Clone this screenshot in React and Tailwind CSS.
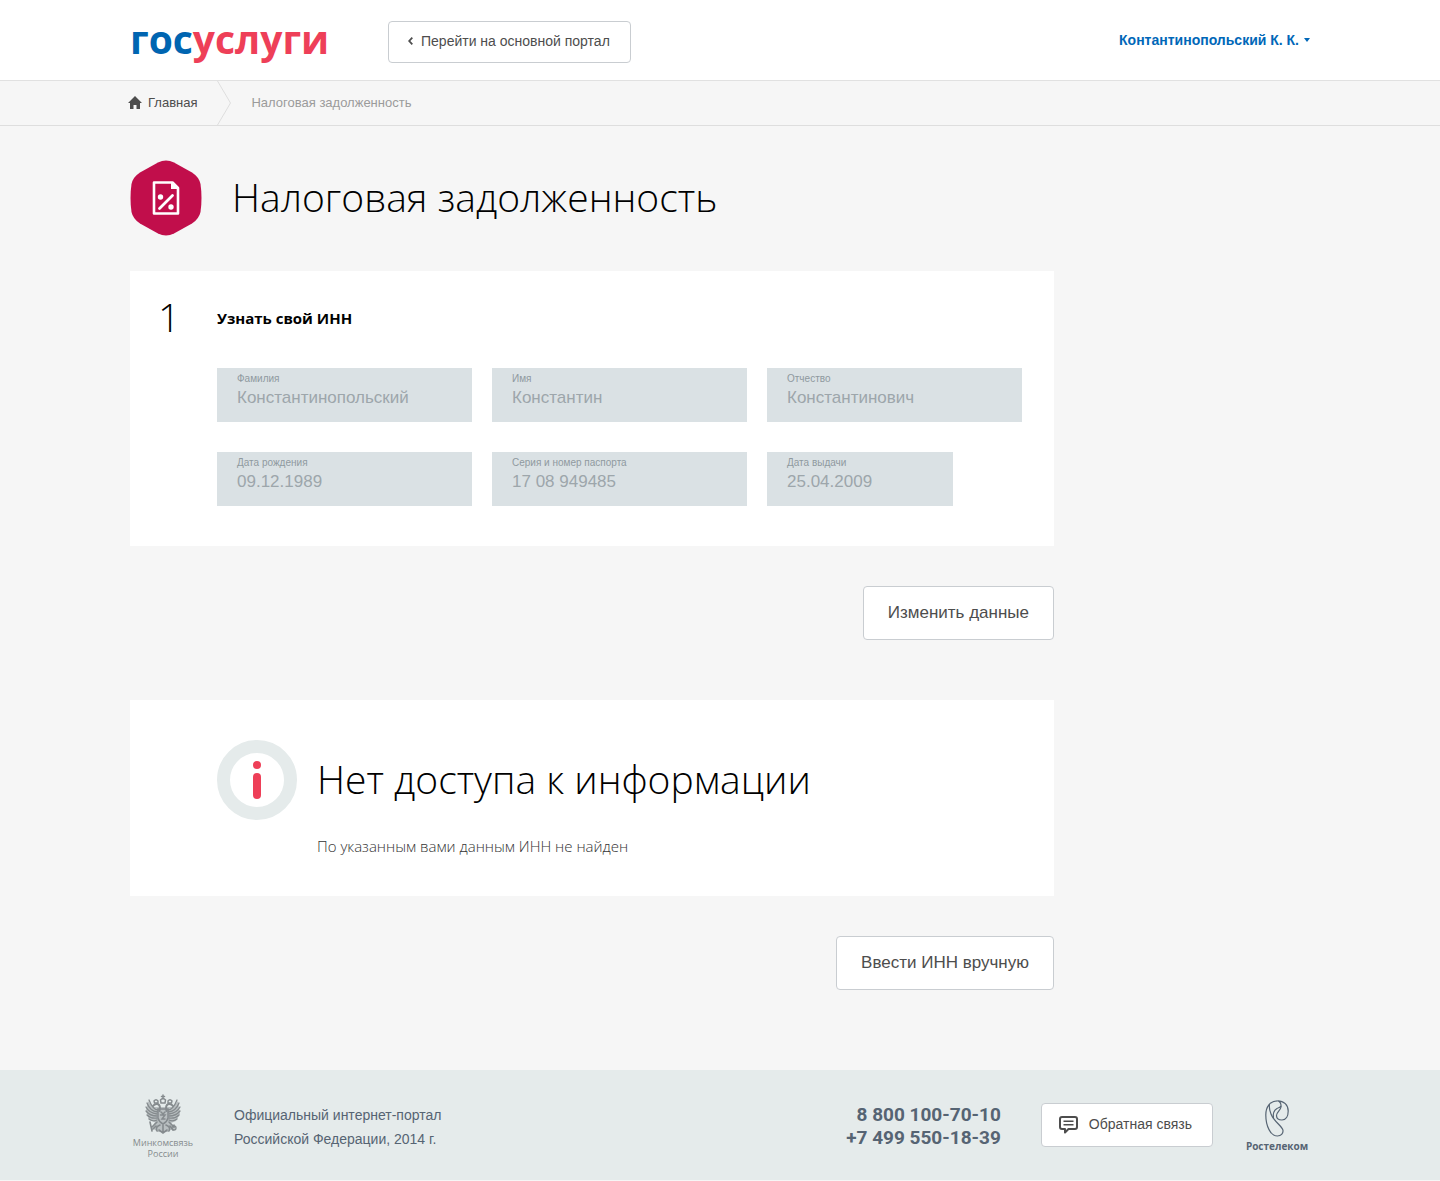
import React from "react";

const HELV = "font-['Liberation_Sans',Arial,sans-serif]";
const OPEN = "font-['Open_Sans','Noto_Sans',sans-serif]";

function Field({ id, label, value, className = "" }) {
  return (
    <div className={`flex h-[54px] flex-col bg-[#dae1e4] px-5 pt-1 ${className}`}>
      <label htmlFor={id} className="h-[14px] text-[10px] leading-[14px] text-[#8f999f]">{label}</label>
      <input id={id} readOnly defaultValue={value} className="h-6 w-full bg-transparent text-[17px] leading-6 text-[#9da6ab] outline-none" />
    </div>
  );
}

function HomeIcon() {
  return (
    <svg width="14" height="13" viewBox="0 0 14 13" fill="#4d4d4d" aria-hidden="true" className="mb-0.5">
      <path d="M7 0 14 7H12V13H8.5V9H5.5V13H2V7H0Z" />
    </svg>
  );
}

function TaxIcon() {
  return (
    <svg width="72" height="76" viewBox="0 0 72 76" className="shrink-0" aria-hidden="true">
      <path fill="#c10e4b" d="M28 2.500Q36-1.500 44 2.500L62 12.500Q69 17 70.500 24Q72.500 38 70.500 52Q69 59 62 63.500L44 73.500Q36 77.500 28 73.500L10 63.500Q3 59 1.500 52Q-.500 38 1.500 24Q3 17 10 12.500Z" />
      <path fill="none" stroke="#fff" strokeWidth="2.600" strokeLinejoin="round" d="M24 22.500H42.500L48 28V53.500H24Z" />
      <path fill="#fff" d="M41 22 49 29H41Z" />
      <path stroke="#fff" strokeWidth="2.800" strokeLinecap="round" d="M29.500 48.500 42.500 35.500" />
      <circle cx="30.500" cy="37" r="2.700" fill="#fff" />
      <circle cx="41" cy="47" r="2.700" fill="#fff" />
    </svg>
  );
}

function InfoIcon() {
  return (
    <svg width="80" height="80" viewBox="0 0 80 80" className="shrink-0" aria-hidden="true">
      <circle cx="40" cy="40" r="33.500" fill="#fff" stroke="#e5ebeb" strokeWidth="13" />
      <circle cx="40" cy="25" r="4" fill="#ee3f58" />
      <rect x="36" y="33" width="8" height="26" rx="4" fill="#ee3f58" />
    </svg>
  );
}

function Emblem() {
  return (
    <svg width="36" height="41" viewBox="0 0 36 41" fill="none" stroke="#858b8e" strokeLinecap="round" aria-hidden="true">
      <path fill="#b9bfc1" stroke="none" d="M3 7 8 13H28L33 7 35 20 31 27 26 29 30 33 23 38H13L7 34 10 28 4 26 1 17Z" />
      <path strokeWidth="1.500" d="M18 1V5M16.500 2.500H19.500M15.500 6Q18 3 20.500 6L20 9H16Z" />
      <path strokeWidth="1.400" d="M9 7Q11 4.500 13 7V9H9.500ZM23 7Q25 4.500 27 7L26.500 9H23Z" />
      <path strokeWidth="2" d="M14.500 17Q16 11 12.500 10Q9.500 9.500 8 12M21.500 17Q20 11 23.500 10Q26.500 9.500 28 12" />
      <path strokeWidth="1.300" d="M13 16Q8 16 4 6M12.500 18Q5 17 2 9M12 20Q4 19 1 13M12 22Q5 22 1 17M12 24Q6 25 2 21M12 26Q8 28 4 25" />
      <path strokeWidth="1.300" d="M23 16Q28 16 32 6M23.500 18Q31 17 34 9M24 20Q32 19 35 13M24 22Q31 22 35 17M24 24Q30 25 34 21M24 26Q28 28 32 25" />
      <path strokeWidth="1.500" d="M13 15H23V24Q22 28 18 30Q14 28 13 24Z" />
      <path strokeWidth="1.500" d="M16 18 18 20 20 18M15.500 21H20L17 25H20" />
      <path strokeWidth="1.600" d="M12 28 7 33M24 28 29 33M5 28 7 37M29 31V34M15 31Q10 33 12 37M21 31Q26 33 24 37M18 31V39M14 36 18 39 22 36M8 35 11 32M28 36 25 32" />
      <circle cx="29" cy="34" r="2" strokeWidth="1.300" />
    </svg>
  );
}

function RostelecomMark() {
  return (
    <svg width="24" height="37" viewBox="0 0 24 37" fill="none" stroke="#566473" strokeWidth="1.200" aria-hidden="true">
      <path d="M12.500.8C5 .8.800 7 .800 15C.800 26 5.500 36 12.500 36C16 36 18.300 33.500 18 30.500C17.500 26 9 22 6 14C4.500 10 4 7 4.500 4.500" />
      <path d="M12.500.8C19 .8 23.200 5 23.200 11C23.200 16 21 20 17 20C13.500 20 11.500 18 11.500 15.500C11.500 12 15.500 10.500 16 7C16.400 4 15 2 13 .8" />
      <path d="M8.500 18.500C7.500 13 9.500 10 12 8.500C14 7.500 15.500 7.500 16 6" />
    </svg>
  );
}

function ChatIcon() {
  return (
    <svg width="19" height="18" viewBox="0 0 19 18" fill="none" stroke="#4d4d4d" strokeWidth="2" className="mt-0.5" aria-hidden="true">
      <path strokeLinejoin="round" d="M3 1H16Q18 1 18 3V11Q18 13 16 13H9.500L6 16.500V13H3Q1 13 1 11V3Q1 1 3 1Z" />
      <path strokeWidth="1.600" d="M4.500 5.200H14.500M4.500 8.800H14.500" />
    </svg>
  );
}

export default function App() {
  return (
    <div className={`bg-[#f6f6f6] pb-px text-[#4d4d4d] ${HELV}`}>
      <header className="border-b border-[#e1e1e1] bg-white">
        <div className="mx-auto flex h-20 max-w-[1180px] items-center">
          <a href="#" className={`w-[258px] pb-0.5 text-[39px] leading-10 font-bold text-[#ee3f58] ${OPEN}`} aria-label="госуслуги">
            <span className="text-[#0065b1]">гос</span>услуги
          </a>
          <button className="mt-1 flex h-[42px] items-center gap-2 rounded-[4px] border border-[#c9cdd1] bg-white pr-5 pb-0.5 pl-[19px] text-[14px]">
            <svg width="5" height="8" viewBox="0 0 5 8" fill="none" stroke="#4d4d4d" strokeWidth="1.800" aria-hidden="true"><path d="M4.300.7 1.200 4 4.300 7.300" /></svg>
            Перейти на основной портал
          </button>
          <button className="ml-auto flex items-center gap-[5px] text-[14px] font-bold text-[#0067b8]">
            Контантинопольский К. К.
            <svg width="6" height="4" viewBox="0 0 6 4" fill="#0067b8" aria-hidden="true"><path d="M0 0H6L3 4Z" /></svg>
          </button>
        </div>
      </header>

      <nav className="border-b border-[#dedede] text-[13px]">
        <div className="mx-auto flex h-11 max-w-[1184px] items-center">
          <a href="#" className="flex items-center gap-1.5"><HomeIcon />Главная</a>
          <svg width="14" height="44" viewBox="0 0 14 44" fill="none" stroke="#dedede" className="mr-5 ml-5" aria-hidden="true"><path d="M.5 0 13.500 22 .5 44" /></svg>
          <span className="text-[#9b9b9b]">Налоговая задолженность</span>
        </div>
      </nav>

      <main className="mx-auto max-w-[1180px] pt-[34px] pb-20 text-black">
        <div className="flex items-center gap-[30px]">
          <TaxIcon />
          <h1 className={`pb-0.5 text-[39px] leading-[48px] font-light ${OPEN}`}>Налоговая задолженность</h1>
        </div>

        <div className="mt-[35px] max-w-[924px]">
          <section className="bg-white pt-6 pr-8 pb-10 pl-7">
            <div className={`flex items-center ${OPEN}`}>
              <span className="w-[59px] text-[39px] leading-[44px] font-light">1</span>
              <h2 className="pt-0.5 text-[15px] leading-6 font-bold">Узнать свой ИНН</h2>
            </div>
            <div className="mt-[29px] ml-[59px] grid grid-cols-3 gap-x-5 gap-y-[30px]">
              <Field id="last" label="Фамилия" value="Константинопольский" />
              <Field id="first" label="Имя" value="Константин" />
              <Field id="middle" label="Отчество" value="Константинович" />
              <Field id="birth" label="Дата рождения" value="09.12.1989" />
              <Field id="passport" label="Серия и номер паспорта" value="17 08 949485" />
              <Field id="issued" label="Дата выдачи" value="25.04.2009" className="w-[186px]" />
            </div>
          </section>
          <div className="mt-10 flex justify-end">
            <button className="h-[54px] rounded-[4px] border border-[#c9cdd1] bg-white px-6 text-[17px] text-[#4d4d4d]">Изменить данные</button>
          </div>

          <section className="mt-[60px] flex gap-5 bg-white pt-10 pb-[38px] pl-[87px]">
            <InfoIcon />
            <div className={`font-light ${OPEN}`}>
              <h2 className="pb-0.5 text-[39px] leading-[78px]">Нет доступа к информации</h2>
              <p className="mt-3.5 text-[15px] leading-6 text-[#333]">По указанным вами данным ИНН не найден</p>
            </div>
          </section>
          <div className="mt-10 flex justify-end">
            <button className="h-[54px] rounded-[4px] border border-[#c9cdd1] bg-white px-6 text-[17px] text-[#4d4d4d]">Ввести ИНН вручную</button>
          </div>
        </div>
      </main>

      <footer className="bg-[#e5ebeb]">
        <div className="mx-auto flex h-[110px] max-w-[1180px] items-center">
          <div className={`flex w-[66px] flex-col items-center pt-0.5 text-center text-[9px] leading-[11px] text-[#858b8e] ${OPEN}`}>
            <Emblem />
            <p className="mt-0.5">Минкомсвязь<br />России</p>
          </div>
          <p className="ml-[38px] pt-1 text-[14px] leading-6 text-[#566473]">Официальный интернет-портал<br />Российской Федерации, 2014 г.</p>
          <p className="ml-auto pt-0.5 text-right font-['Roboto','Liberation_Sans',sans-serif] text-[19px] leading-[23px] font-bold text-[#566473]">8 800 100-70-10<br />+7 499 550-18-39</p>
          <button className="ml-10 flex h-11 items-center gap-[11px] rounded-[4px] border border-[#c9cdd1] bg-white pr-5 pb-0.5 pl-[17px] text-[14px]"><ChatIcon />Обратная связь</button>
          <div className={`ml-[31px] flex w-[66px] flex-col items-center pt-0.5 text-[10px] leading-[14px] font-bold text-[#566473] ${OPEN}`}>
            <RostelecomMark />
            <span className="mt-0.5">Ростелеком</span>
          </div>
        </div>
      </footer>
    </div>
  );
}
